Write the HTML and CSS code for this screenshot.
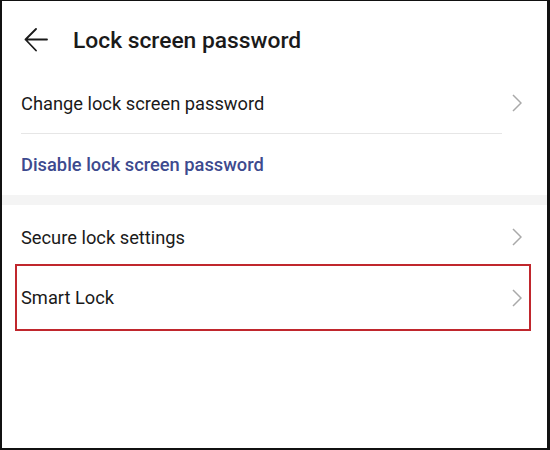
FILE: index.html
```html
<!DOCTYPE html>
<html lang="en">
<head>
  <meta charset="UTF-8" />
  <meta name="viewport" content="width=device-width, initial-scale=1.0" />
  <title>Lock screen password</title>
  <link rel="stylesheet" href="styles.css">
</head>
<body>
  <div class="screen">
    <div class="header">
      <button class="back" aria-label="Back">
        <svg width="24" height="24" viewBox="0 0 24 24">
          <path d="M23 11.5H1.5M12 1L1.5 11.5L12 22.5" fill="none" stroke="#1a1a1a" stroke-width="1.8" stroke-linecap="round" stroke-linejoin="round"/>
        </svg>
      </button>
      <h1 class="title">Lock screen password</h1>
    </div>

    <div class="row first">
      <span>Change lock screen password</span>
      <svg class="chevron" width="10" height="18" viewBox="0 0 10 18">
        <path d="M1 1L9 9L1 17" fill="none" stroke="#a9a9a9" stroke-width="1.5"/>
      </svg>
    </div>
    <div class="divider"></div>
    <div class="row action">
      <span>Disable lock screen password</span>
    </div>

    <div class="gap"></div>

    <div class="row third">
      <span>Secure lock settings</span>
      <svg class="chevron" width="10" height="18" viewBox="0 0 10 18">
        <path d="M1 1L9 9L1 17" fill="none" stroke="#a9a9a9" stroke-width="1.5"/>
      </svg>
    </div>
    <div class="row highlight">
      <span>Smart Lock</span>
      <svg class="chevron" width="10" height="18" viewBox="0 0 10 18">
        <path d="M1 1L9 9L1 17" fill="none" stroke="#a9a9a9" stroke-width="1.5"/>
      </svg>
    </div>
  </div>
</body>
</html>
```

FILE: styles.css
```css
* {
  margin: 0;
  padding: 0;
  box-sizing: border-box;
  font-family: Roboto, "Liberation Sans", sans-serif;
}

body {
  background-color: #ffffff;
}

.screen {
  width: 550px;
  height: 450px;
  border-style: solid;
  border-color: #111111;
  border-width: 1px 3px 2px 2px;
  background-color: #ffffff;
  overflow: hidden;
}

.header {
  display: flex;
  align-items: center;
  height: 72px;
  padding: 6px 0 0 22px;
}

.back {
  display: flex;
  background: none;
  border: none;
  cursor: pointer;
}

.title {
  margin-left: 25px;
  font-size: 22.8px;
  font-weight: 500;
  color: #1a1a1a;
}

.row {
  display: flex;
  justify-content: space-between;
  align-items: center;
  height: 60px;
  padding: 0 25px 0 19px;
  font-size: 18.3px;
  color: #1a1a1a;
}

.divider {
  height: 1px;
  width: 481px;
  margin-left: 19px;
  background-color: #e6e6e6;
}

.row.action {
  height: 61px;
  color: #3d4a8e;
  font-weight: 500;
}

.gap {
  height: 10px;
  background-color: #f4f4f4;
}

.row.third {
  height: 59px;
  padding-top: 5px;
}

.row.highlight {
  height: 67px;
  margin: 0 16px 0 13px;
  padding: 0 7px 0 4px;
  border: 2px solid #c0272d;
}
```
